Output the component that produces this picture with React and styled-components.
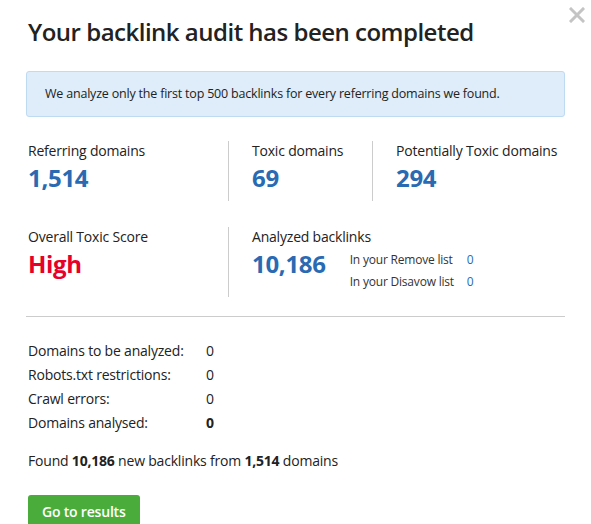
import React from 'react';
import styled, { createGlobalStyle } from 'styled-components';

const GlobalStyle = createGlobalStyle`
  html, body {
    margin: 0;
    padding: 0;
    background: #fff;
  }
  body {
    font-family: 'Open Sans', 'Noto Sans', sans-serif;
    color: #333;
  }
`;

const stats = [
  { label: 'Domains to be analyzed:', value: '0' },
  { label: 'Robots.txt restrictions:', value: '0' },
  { label: 'Crawl errors:', value: '0' },
  { label: 'Domains analysed:', value: '0', bold: true },
];

export default function App() {
  return (
    <>
      <GlobalStyle />
      <Dialog>
        <CloseBtn aria-label="close">
          <svg width="16" height="16" viewBox="0 0 16 16">
            <path d="M2 2 L14 14 M14 2 L2 14" stroke="#c4c4c4" strokeWidth="3" strokeLinecap="square" />
          </svg>
        </CloseBtn>
        <Title>Your backlink audit has been completed</Title>
        <Notice>We analyze only the first top 500 backlinks for every referring domains we found.</Notice>

        <MetricRow>
          <Metric width="200px">
            <Label>Referring domains</Label>
            <Value>1,514</Value>
          </Metric>
          <Metric width="144px" divided>
            <Label>Toxic domains</Label>
            <Value>69</Value>
          </Metric>
          <Metric divided>
            <Label>Potentially Toxic domains</Label>
            <Value>294</Value>
          </Metric>
        </MetricRow>

        <MetricRow tall>
          <Metric width="200px">
            <Label>Overall Toxic Score</Label>
            <Value danger>High</Value>
          </Metric>
          <Metric divided>
            <Label>Analyzed backlinks</Label>
            <BacklinkLine>
              <Value>10,186</Value>
              <SubList>
                <SubItem>
                  <span>In your Remove list</span>
                  <SubNum>0</SubNum>
                </SubItem>
                <SubItem>
                  <span>In your Disavow list</span>
                  <SubNum>0</SubNum>
                </SubItem>
              </SubList>
            </BacklinkLine>
          </Metric>
        </MetricRow>

        <Divider />

        <StatList>
          {stats.map(s => (
            <StatRow key={s.label}>
              <StatLabel>{s.label}</StatLabel>
              <StatValue bold={s.bold}>{s.value}</StatValue>
            </StatRow>
          ))}
        </StatList>

        <Summary>
          Found <b>10,186</b> new backlinks from <b>1,514</b> domains
        </Summary>

        <GreenButton>Go to results</GreenButton>
      </Dialog>
    </>
  );
}

const Dialog = styled.div`
  position: relative;
  width: 591px;
  height: 524px;
  box-sizing: border-box;
  padding: 13px 26px 0 26px;
  overflow: hidden;
`;

const CloseBtn = styled.button`
  position: absolute;
  top: 7px;
  right: 6px;
  padding: 0;
  border: none;
  background: none;
  cursor: pointer;
`;

const Title = styled.h1`
  margin: 0 0 0 2px;
  font-size: 24px;
  font-weight: 600;
  line-height: 38px;
  color: #222;
  letter-spacing: -0.5px;
`;

const Notice = styled.div`
  margin-top: 20px;
  padding: 13px 18px;
  background: #deedf9;
  border: 1px solid #bfdbf1;
  border-radius: 3px;
  font-size: 12.5px;
  line-height: 18px;
  color: #222;
  letter-spacing: -0.2px;
`;

const MetricRow = styled.div`
  display: flex;
  margin-top: ${({ tall }) => (tall ? '26px' : '24px')};
  padding-left: 2px;
`;

const Metric = styled.div`
  display: flex;
  flex-direction: column;
  box-sizing: border-box;
  width: ${({ width }) => width || 'auto'};
  flex: ${({ width }) => (width ? 'none' : '1')};
  padding-left: ${({ divided }) => (divided ? '23px' : '0')};
  border-left: ${({ divided }) => (divided ? '1px solid #ccc' : 'none')};
  padding-bottom: 6px;
`;

const Label = styled.div`
  font-size: 14px;
  line-height: 20px;
  color: #222;
  letter-spacing: -0.2px;
`;

const Value = styled.div`
  font-size: 24px;
  font-weight: 700;
  line-height: 34px;
  color: ${({ danger }) => (danger ? '#e8002a' : '#2a6ab3')};
  letter-spacing: -0.3px;
`;

const BacklinkLine = styled.div`
  display: flex;
  align-items: flex-start;
  gap: 24px;
`;

const SubList = styled.div`
  display: flex;
  flex-direction: column;
  gap: 4px;
  padding-top: 4px;
`;

const SubItem = styled.div`
  display: flex;
  font-size: 12px;
  line-height: 18px;
  color: #333;
  letter-spacing: -0.2px;

  span:first-child {
    width: 117px;
  }
`;

const SubNum = styled.span`
  color: #2a6ab3;
`;

const Divider = styled.hr`
  margin: 19px 0 0;
  border: none;
  border-top: 1px solid #ccc;
`;

const StatList = styled.div`
  display: flex;
  flex-direction: column;
  margin-top: 22px;
  padding-left: 2px;
`;

const StatRow = styled.div`
  display: flex;
  font-size: 14px;
  line-height: 24px;
  color: #222;
  letter-spacing: -0.2px;
`;

const StatLabel = styled.span`
  width: 178px;
`;

const StatValue = styled.span`
  font-weight: ${({ bold }) => (bold ? 700 : 400)};
`;

const Summary = styled.p`
  margin: 16px 0 0 2px;
  font-size: 14px;
  line-height: 20px;
  color: #222;
  letter-spacing: -0.2px;

  b {
    font-weight: 700;
  }
`;

const GreenButton = styled.button`
  display: block;
  margin: 24px 0 0 2px;
  padding: 0 14px;
  height: 32px;
  border: none;
  border-radius: 3px;
  background: #4aad3b;
  color: #fff;
  font-family: inherit;
  font-size: 14px;
  font-weight: 600;
  letter-spacing: -0.2px;
  cursor: pointer;
`;
